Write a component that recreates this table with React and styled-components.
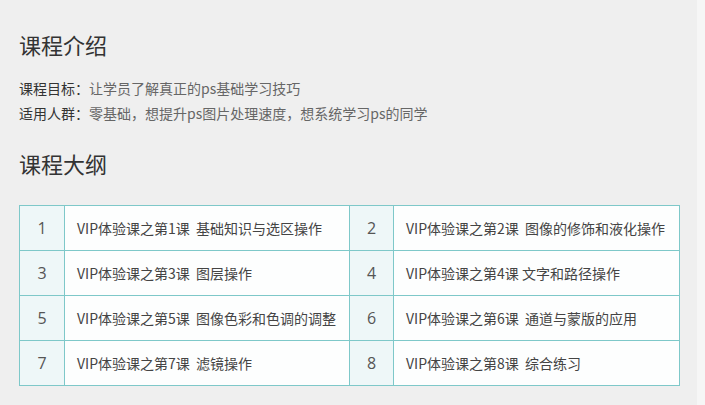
import React from "react";
import styled, { createGlobalStyle } from "styled-components";

const Global = createGlobalStyle`
  html, body { margin: 0; padding: 0; background: #f6f6f6; }
  body { font-family: "Noto Sans CJK SC", "Open Sans", sans-serif; }
`;

const Page = styled.div`
  width: 697px;
  height: 405px;
  background: #efefef;
  padding: 27px 0 0 19px;
  box-sizing: border-box;
  overflow: hidden;
`;

const Heading = styled.h2`
  margin: 0;
  font-size: 22px;
  font-weight: 400;
  line-height: 34px;
  color: #333;
  margin-top: ${(p) => p.$top || 0}px;
`;

const Info = styled.div`
  margin-top: 15px;
  font-size: 14px;
  line-height: 25px;
  color: #666;
`;

const Label = styled.span`
  color: #333;
`;

const Table = styled.table`
  margin-top: 25px;
  width: 660px;
  border-collapse: collapse;
  table-layout: fixed;
  font-size: 14px;
`;

const Row = styled.tr`
  height: 45px;
`;

const Num = styled.td`
  border: 1px solid #7ec8c9;
  background: #eef7f8;
  text-align: center;
  color: #555;
  font-family: "Open Sans", "Noto Sans CJK SC", sans-serif;
  font-size: 16px;
  padding: 0;
`;

const Title = styled.td`
  border: 1px solid #7ec8c9;
  background: #fdfefe;
  color: #444;
  padding: 0 0 0 12px;
  white-space: pre;
`;

const lessons = [
  "VIP体验课之第1课  基础知识与选区操作",
  "VIP体验课之第2课  图像的修饰和液化操作",
  "VIP体验课之第3课  图层操作",
  "VIP体验课之第4课 文字和路径操作",
  "VIP体验课之第5课  图像色彩和色调的调整",
  "VIP体验课之第6课  通道与蒙版的应用",
  "VIP体验课之第7课  滤镜操作",
  "VIP体验课之第8课  综合练习",
];

export default function App() {
  const rows = [0, 1, 2, 3];
  return (
    <>
      <Global />
      <Page>
        <Heading>课程介绍</Heading>
        <Info>
          <div>
            <Label>课程目标：</Label>让学员了解真正的ps基础学习技巧
          </div>
          <div>
            <Label>适用人群：</Label>零基础，想提升ps图片处理速度，想系统学习ps的同学
          </div>
        </Info>
        <Heading $top={20}>课程大纲</Heading>
        <Table>
          <colgroup>
            <col style={{ width: 45 }} />
            <col style={{ width: 285 }} />
            <col style={{ width: 44 }} />
            <col style={{ width: 286 }} />
          </colgroup>
          <tbody>
            {rows.map((r) => (
              <Row key={r}>
                <Num>{r * 2 + 1}</Num>
                <Title>{lessons[r * 2]}</Title>
                <Num>{r * 2 + 2}</Num>
                <Title>{lessons[r * 2 + 1]}</Title>
              </Row>
            ))}
          </tbody>
        </Table>
      </Page>
    </>
  );
}
